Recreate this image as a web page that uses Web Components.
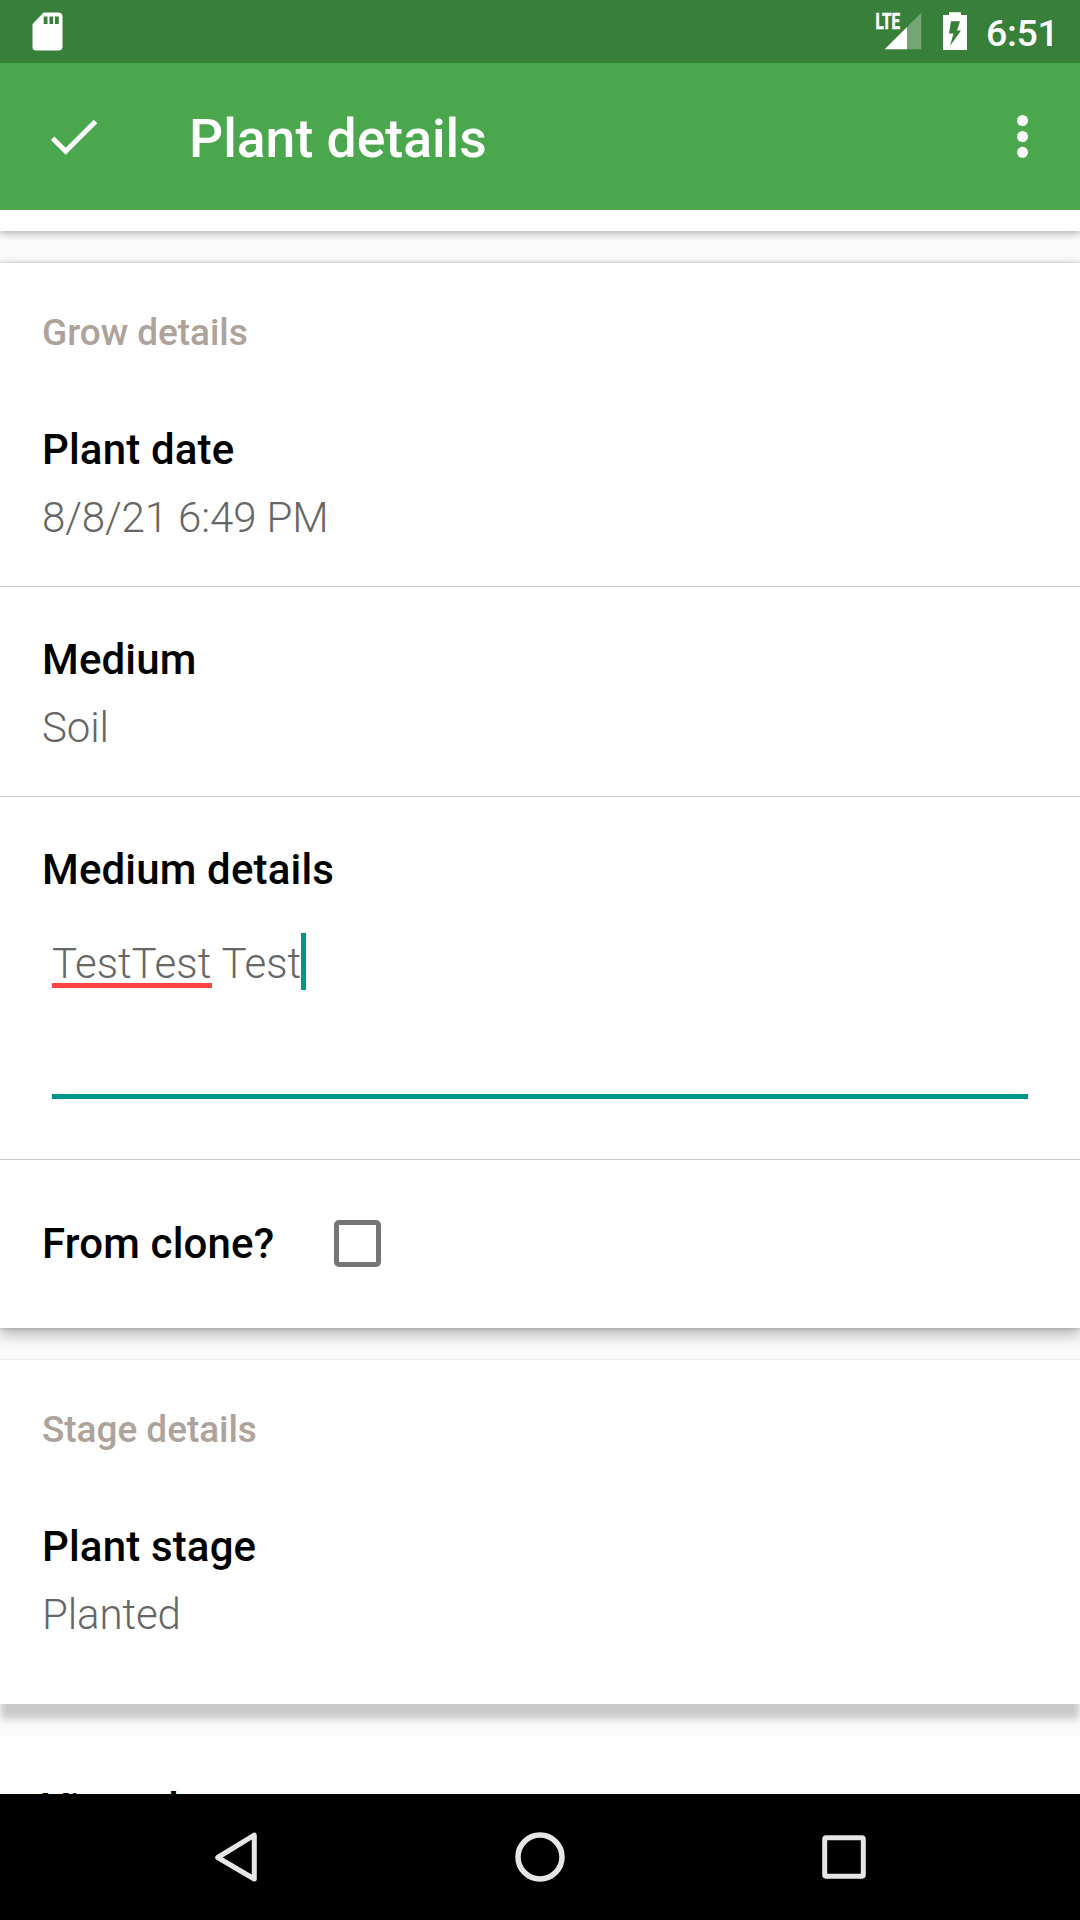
<!DOCTYPE html>
<html lang="en">
<head>
<meta charset="utf-8">
<title>Plant details</title>
<style>
html,body{margin:0;height:100%;overflow:hidden}
body{font-family:Roboto,"Noto Sans",sans-serif;background:#fafafa}
</style>
</head>
<body>
<plant-screen></plant-screen>
<script>
const define = (name, html) => {
  const t = document.createElement('template');
  t.innerHTML = html;
  customElements.define(name, class extends HTMLElement {
    constructor() {
      super();
      this.attachShadow({mode: 'open'}).append(t.content.cloneNode(true));
    }
  });
};

define('status-bar', `
<style>
:host{display:flex;height:63px;background:#387f3a;color:#fff;flex:none;justify-content:space-between}
svg{display:block;flex:none}
.right{display:flex}
.time{width:94px;font-size:37.5px;font-weight:500;line-height:66px;letter-spacing:-.3px;white-space:nowrap}
</style>
<svg width="100" height="63"><path fill="#fff" fill-rule="evenodd" d="M43.500 12.500H58.500Q62 12.500 62.500 16V47Q62 50.500 58.500 50.500H36Q32.500 50.500 32.500 47V24ZM43.700 16.500V24H47.500V16.500ZM49.500 16.500V24H53.200V16.500ZM55 16.500V24H58.800V16.500Z"/></svg>
<div class="right">
<svg width="112" height="63" viewBox="874 0 112 63">
<text x="875.500" y="29" font-family="Roboto" font-size="22" font-weight="700" fill="#fff" stroke="#fff" stroke-width=".6" textLength="24.500" lengthAdjust="spacingAndGlyphs">LTE</text>
<path fill="#fff" opacity=".3" d="M907 27L921.300 12.700V49.300H907Z"/>
<path fill="#fff" d="M884.700 49.300L907 27V49.300Z"/>
<path fill="#fff" fill-rule="evenodd" d="M949 12.300H961V15H967V50H943V15H949ZM951 21.300L949 33.500H953.500L950 46L961 30.500H957L960 21.300Z"/>
</svg>
<div class="time">6:51</div>
</div>`);

define('app-bar', `
<style>
:host{display:flex;align-items:center;height:147px;background:#4ba74e;color:#fff;flex:none}
svg{display:block;flex:none}
h1{margin:0 0 0 45px;flex:1;font-size:53.500px;font-weight:500;line-height:60px;padding-top:4px}
</style>
<svg width="144" height="147" viewBox="0 63 144 147"><path d="M52.700 138.200L65.700 151.200L95.500 121.400" fill="none" stroke="#fff" stroke-width="5"/></svg>
<h1><slot></slot></h1>
<svg width="116" height="147" viewBox="964 63 116 147" fill="#fff"><circle cx="1022.500" cy="120.500" r="5.500"/><circle cx="1022.500" cy="136.500" r="5.500"/><circle cx="1022.500" cy="152.300" r="5.500"/></svg>`);

define('detail-card', `
<style>
:host{display:block;background:#fff;flex:none;box-sizing:border-box;box-shadow:var(--card-shadow)}
</style><slot></slot>`);

define('card-heading', `
<style>
:host{display:block;font-size:37px;font-weight:500;color:#aea39b;line-height:44px;letter-spacing:-.05px;padding:48px 42px 0}
</style><slot></slot>`);

define('detail-field', `
<style>
:host{display:block;padding:48px 42px 0;font-size:42px;line-height:50px}
:host([first]){padding-top:70px}
:host([divided]){border-bottom:1px solid #c8c8c8}
.label{font-weight:500;color:#000;letter-spacing:.16px}
.value{font-weight:300;color:#666;padding-top:18px;letter-spacing:-.1px}
</style><div class="label"><slot name="label"></slot></div><div class="value"><slot></slot></div>`);

define('text-entry', `
<style>
:host{display:block;margin:20px 10px 0;height:161px;border-bottom:5px solid #009688;letter-spacing:0}
.line{display:flex;height:57px;line-height:61px}
.word{height:50px;border-bottom:5px solid #ff4444;width:160px;white-space:nowrap}
.rest{white-space:pre}
.caret{width:5px;height:57px;background:#009688}
</style>
<div class="line"><span class="word">TestTest</span><span class="rest"> Test</span><span class="caret"></span></div>`);

define('check-row', `
<style>
:host{display:flex;align-items:center;height:168px;padding-left:42px;font-size:42px;font-weight:500;color:#000;box-sizing:border-box}
.text{width:291.500px;letter-spacing:.16px;padding-bottom:2px}
svg{display:block}
</style><span class="text"><slot></slot></span><svg width="48" height="48" fill="none" stroke="#757575" stroke-width="5"><rect x="2.500" y="2.500" width="42" height="42" rx="2.500"/></svg>`);

define('nav-bar', `
<style>
:host{display:flex;height:126px;background:#000;flex:none}
svg{display:block}
</style>
<svg width="1080" height="126" viewBox="0 1794 1080 126" fill="none" stroke="#e6e6e6" stroke-width="5" stroke-linejoin="round">
<path d="M217.700 1857.500L254.300 1835.200V1879Z"/>
<circle cx="540" cy="1857" r="22" stroke-width="5.500"/>
<rect x="824.700" y="1837.700" width="38.600" height="38.600" rx="1.500"/>
</svg>`);

define('plant-screen', `
<style>
:host{display:flex;flex-direction:column;width:1080px;height:1920px;overflow:hidden}
main{flex:1;min-height:0;overflow:hidden;display:flex;flex-direction:column;gap:32px;background:#fafafa}
.tail{height:21px;--card-shadow:0 2px 9px rgba(0,0,0,.32)}
.grow{height:1065px;--card-shadow:0 6px 14px rgba(0,0,0,.3),0 0 4px rgba(0,0,0,.2)}
.stage{height:344px;--card-shadow:0 16px 7px -1px #c9c9c9,0 0 2px rgba(0,0,0,.15)}
.view{height:200px}
.date{height:161px}
.medium{height:161px}
.notes{height:314px}
</style>
<status-bar></status-bar>
<app-bar>Plant details</app-bar>
<main>
<detail-card class="tail"></detail-card>
<detail-card class="grow">
<card-heading>Grow details</card-heading>
<detail-field first divided class="date"><span slot="label">Plant date</span>8/8/21 6:49 PM</detail-field>
<detail-field divided class="medium"><span slot="label">Medium</span>Soil</detail-field>
<detail-field divided class="notes"><span slot="label">Medium details</span><text-entry></text-entry></detail-field>
<check-row>From clone?</check-row>
</detail-card>
<detail-card class="stage">
<card-heading>Stage details</card-heading>
<detail-field first><span slot="label">Plant stage</span>Planted</detail-field>
</detail-card>
<detail-card class="view"><detail-field><span slot="label">View photos</span></detail-field></detail-card>
</main>
<nav-bar></nav-bar>`);
</script>
</body>
</html>
